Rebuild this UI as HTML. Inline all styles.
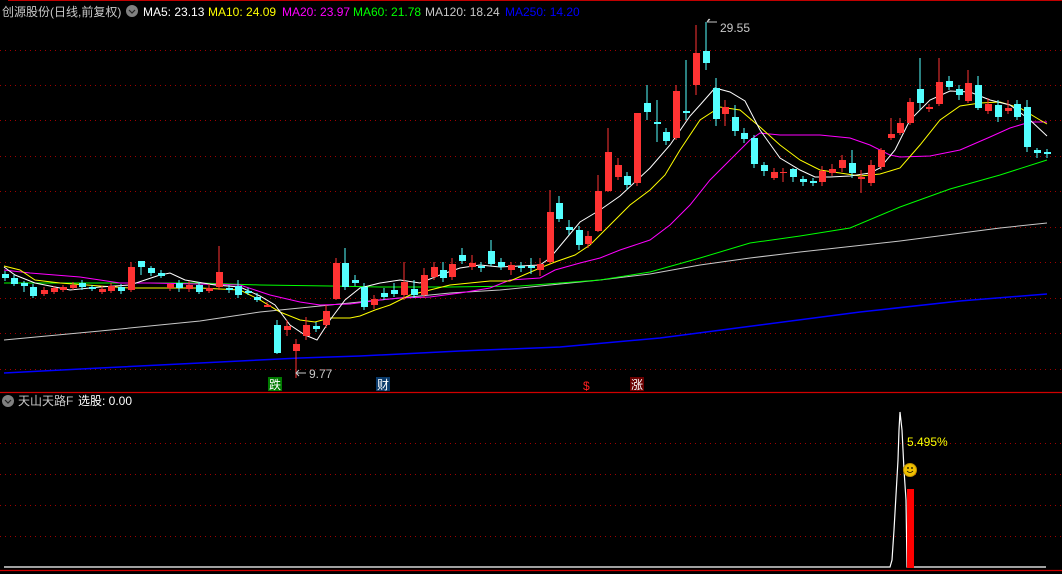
<!DOCTYPE html>
<html><head><meta charset="utf-8"><style>
html,body{margin:0;padding:0;background:#000;overflow:hidden}
svg{display:block}
text{font-family:"Liberation Sans","Noto Sans CJK SC",sans-serif;font-size:12px}
</style></head><body>
<svg width="1062" height="574" viewBox="0 0 1062 574" xmlns="http://www.w3.org/2000/svg">
<rect width="1062" height="574" fill="#000"/>
<line x1="8" y1="0.5" x2="1062" y2="0.5" stroke="#c00000"/>
<g stroke="#a00000" stroke-dasharray="1,4" stroke-width="1">
<line x1="0" y1="50.5" x2="1062" y2="50.5"/><line x1="0" y1="85.5" x2="1062" y2="85.5"/>
<line x1="0" y1="120.5" x2="1062" y2="120.5"/><line x1="0" y1="156.5" x2="1062" y2="156.5"/>
<line x1="0" y1="191.5" x2="1062" y2="191.5"/><line x1="0" y1="227.5" x2="1062" y2="227.5"/>
<line x1="0" y1="262.5" x2="1062" y2="262.5"/><line x1="0" y1="298.5" x2="1062" y2="298.5"/>
<line x1="0" y1="333.5" x2="1062" y2="333.5"/><line x1="0" y1="369.5" x2="1062" y2="369.5"/>
<line x1="0" y1="443.5" x2="1062" y2="443.5"/><line x1="0" y1="474.5" x2="1062" y2="474.5"/>
<line x1="0" y1="505.5" x2="1062" y2="505.5"/><line x1="0" y1="536.5" x2="1062" y2="536.5"/>
</g>
<line x1="0" y1="392.5" x2="1062" y2="392.5" stroke="#d00000" stroke-width="1.2"/>
<line x1="0" y1="570.5" x2="1062" y2="570.5" stroke="#d00000" stroke-width="1.2"/>

<!-- MA lines -->
<g fill="none" stroke-width="1">
<polyline stroke="#0000ff" stroke-width="1.5" points="4,373 100,368 200,363 300,358 360,356 460,351 560,347 660,338 760,325 860,312 960,301 1047,294"/>
<polyline stroke="#c8c8c8" points="4,340 100,331 200,321 260,312 320,306 400,298 450,293 500,290 550,285 600,280 650,274 700,265 750,258 800,252 900,241 1000,228 1047,223"/>
<polyline stroke="#00ff00" points="4,283 100,283 200,283 260,285 330,286 380,287 450,287 520,286 560,283 600,280 650,272 700,258 750,243 800,236 850,228 900,207 950,189 1000,175 1047,160"/>
<polyline stroke="#ff00ff" points="4,270 30,273 80,277 120,283 150,283 200,284 240,285 270,295 300,302 320,305 350,304 380,300 400,298 430,297 460,293 490,288 510,280 540,278 555,270 580,263 600,258 620,250 650,240 670,225 690,205 710,180 730,160 750,140 760,133 780,135 820,135 850,138 870,145 890,155 900,157 930,156 960,150 990,137 1010,128 1030,122 1047,122"/>
<polyline stroke="#ffff00" points="4,266 20,270 35,280 60,283 100,286 130,288 200,288 240,290 260,300 280,312 300,320 315,322 330,318 350,318 360,316 375,310 390,305 410,295 430,290 450,285 470,283 490,281 510,281 540,268 555,262 575,255 590,245 610,225 630,205 650,190 665,175 680,150 700,120 720,107 740,110 760,127 780,145 800,160 820,170 840,173 860,176 880,174 900,168 920,145 940,120 960,106 980,103 1000,102 1020,108 1040,120 1047,124"/>
<polyline stroke="#ffffff" points="4,267 15,275 35,283 70,290 100,287 130,285 160,275 170,273 185,280 215,285 240,287 260,296 275,305 290,325 305,335 317,340 330,320 345,300 360,288 380,283 400,280 420,283 440,275 460,268 480,265 500,267 520,266 540,265 550,258 565,240 580,222 600,210 620,196 650,168 670,145 690,116 700,105 715,88 730,92 745,101 760,130 780,158 800,170 815,177 830,177 850,176 870,173 880,168 895,150 910,120 930,100 950,91 970,92 990,100 1010,105 1030,120 1047,136"/>
</g>

<!-- candles: cyan -->
<g stroke="#54ffff" fill="#54ffff">
<path d="M5,271V281M14,275V286M24,281V292M33,284V298M82,280V290M92,285V291M121,284V294M141,263V275M151,266V276M161,270V278M179,280V292M199,282V294M229,285V293M238,280V298M248,288V295M257,293V302M277,320V354M316,322V332M345,248V290M355,275V286M364,283V310M384,288V300M394,283V297M414,280V298M443,262V282M462,248V264M481,262V272M491,240V266M501,258V270M521,262V272M531,258V274M559,196V222M569,220V235M579,226V250M627,172V190M647,85V120M657,100V142M666,128V145M686,60V120M706,22V70M716,78V126M735,105V136M744,128V143M754,135V168M764,162V176M793,168V182M803,176V186M813,178V186M852,150V178M920,58V110M949,76V90M959,85V100M978,76V110M998,100V122M1017,100V120M1027,100V152M1037,148V158M1047,149V158"/>
<path stroke="none" d="M2,274h7v4h-7zM11,278h7v6h-7zM21,283h7v3h-7zM30,287h7v9h-7zM79,283h7v4h-7zM89,287h7v2h-7zM118,287h7v4h-7zM138,261h7v6h-7zM148,268h7v5h-7zM158,273h7v3h-7zM176,283h7v5h-7zM196,285h7v7h-7zM226,288h7v2h-7zM235,286h7v9h-7zM245,291h7v2h-7zM254,297h7v3h-7zM274,325h7v28h-7zM313,326h7v3h-7zM342,263h7v24h-7zM352,280h7v3h-7zM361,287h7v20h-7zM381,293h7v4h-7zM391,290h7v4h-7zM411,289h7v6h-7zM440,270h7v8h-7zM459,255h7v6h-7zM478,266h7v2h-7zM488,251h7v13h-7zM498,262h7v5h-7zM518,266h7v2h-7zM528,266h7v2h-7zM556,203h7v16h-7zM566,227h7v3h-7zM576,230h7v15h-7zM624,176h7v9h-7zM644,103h7v9h-7zM654,122h7v2h-7zM663,132h7v9h-7zM683,111h7v2h-7zM703,51h7v12h-7zM713,88h7v31h-7zM732,117h7v14h-7zM741,133h7v6h-7zM751,138h7v26h-7zM761,165h7v6h-7zM790,169h7v8h-7zM800,179h7v3h-7zM810,181h7v2h-7zM849,163h7v10h-7zM917,89h7v14h-7zM946,81h7v6h-7zM956,89h7v6h-7zM975,85h7v23h-7zM995,105h7v12h-7zM1014,104h7v13h-7zM1024,107h7v40h-7zM1034,150h7v3h-7zM1044,152h7v2h-7z"/>
</g>
<!-- candles: red -->
<g stroke="#ff3333" fill="#ff3333">
<path d="M44,287V296M54,286V294M63,285V292M73,282V290M102,286V294M111,283V293M131,262V292M170,283V291M189,281V292M209,284V293M219,246V290M267,302V307M287,320V336M296,339V378M306,317V340M326,305V328M336,258V300M374,295V309M404,262V300M424,268V298M434,262V280M452,258V280M472,255V270M511,262V275M540,258V276M550,190V264M588,231V248M598,175V232M608,128V192M618,158V180M637,113V186M676,85V140M696,25V95M725,100V126M774,168V180M783,168V182M822,166V186M832,164V176M842,155V172M861,170V193M871,160V186M881,148V170M891,118V140M900,118V135M910,98V125M929,104V112M939,58V106M968,70V103M988,98V114M1008,100V114"/>
<path stroke="none" d="M41,290h7v4h-7zM51,288h7v4h-7zM60,287h7v3h-7zM70,285h7v3h-7zM99,289h7v3h-7zM108,286h7v5h-7zM128,267h7v23h-7zM167,284h7v4h-7zM186,285h7v4h-7zM206,288h7v3h-7zM216,272h7v15h-7zM264,305h7v2h-7zM284,326h7v4h-7zM293,344h7v7h-7zM303,325h7v11h-7zM323,311h7v14h-7zM333,263h7v36h-7zM371,299h7v6h-7zM401,282h7v13h-7zM421,275h7v20h-7zM431,267h7v10h-7zM449,264h7v13h-7zM469,263h7v4h-7zM508,265h7v5h-7zM537,264h7v6h-7zM547,212h7v50h-7zM585,236h7v8h-7zM595,191h7v40h-7zM605,152h7v39h-7zM615,165h7v12h-7zM634,113h7v70h-7zM673,91h7v47h-7zM693,53h7v32h-7zM722,107h7v7h-7zM771,172h7v6h-7zM780,172h7v1h-7zM819,171h7v11h-7zM829,169h7v4h-7zM839,160h7v8h-7zM858,177h7v2h-7zM868,165h7v18h-7zM878,150h7v17h-7zM888,134h7v4h-7zM897,123h7v10h-7zM907,102h7v21h-7zM926,107h7v2h-7zM936,82h7v22h-7zM965,83h7v18h-7zM985,104h7v7h-7zM1005,108h7v3h-7z"/>
</g>

<!-- annotations -->
<g stroke="#c8c8c8" fill="none"><path d="M296,373h10M299,370l-3,3l3,3M707,22h10M709,19l-2,3M707,22l3-3"/></g>
<text x="309" y="378" fill="#c8c8c8" font-size="11">9.77</text>
<text x="720" y="32" fill="#c8c8c8" font-size="11">29.55</text>
<rect x="268" y="377" width="14" height="14" fill="#007a00"/><text x="269" y="389" fill="#fff">跌</text>
<rect x="376" y="377" width="14" height="14" fill="#0a3a6a"/><text x="377" y="389" fill="#fff">财</text>
<text x="583" y="390" fill="#ff2020" font-size="12">$</text>
<rect x="630" y="377" width="14" height="14" fill="#6a0000"/><text x="631" y="389" fill="#fff">涨</text>

<!-- header -->
<text x="2" y="16" fill="#c8c8c8">创源股份(日线,前复权)</text>
<circle cx="132" cy="11" r="6" fill="#808080"/><path d="M129,10l3,3l3-3" stroke="#222" fill="none" stroke-width="1.2"/>
<text x="143" y="16" fill="#fff">MA5: 23.13</text>
<text x="208" y="16" fill="#ffff00">MA10: 24.09</text>
<text x="282" y="16" fill="#ff00ff">MA20: 23.97</text>
<text x="353" y="16" fill="#00ff00">MA60: 21.78</text>
<text x="425" y="16" fill="#c8c8c8">MA120: 18.24</text>
<text x="505" y="16" fill="#0000ff">MA250: 14.20</text>

<!-- lower panel -->
<circle cx="8" cy="401" r="6" fill="#808080"/><path d="M5,400l3,3l3-3" stroke="#222" fill="none" stroke-width="1.2"/>
<text x="18" y="405" fill="#c8c8c8">天山天路F</text>
<text x="78" y="405" fill="#fff">选股: 0.00</text>
<polyline fill="none" stroke="#fff" stroke-width="1.2" points="4,567 890,567 892,560 894,530 896,495 898,460 899,430 900,412 902,430 904,470 906,500 907,567 1046,567"/>
<rect x="907" y="489" width="7" height="79" fill="#ff0000"/>
<text x="907" y="446" fill="#ffff00" font-size="11">5.495%</text>
<circle cx="910" cy="470" r="6.5" fill="#f0c000" stroke="#c09000"/>
<circle cx="908" cy="468" r="0.9" fill="#000"/><circle cx="912" cy="468" r="0.9" fill="#000"/>
<path d="M907,471q3,3 6,0" stroke="#000" fill="none" stroke-width="0.8"/>
</svg>
</body></html>
